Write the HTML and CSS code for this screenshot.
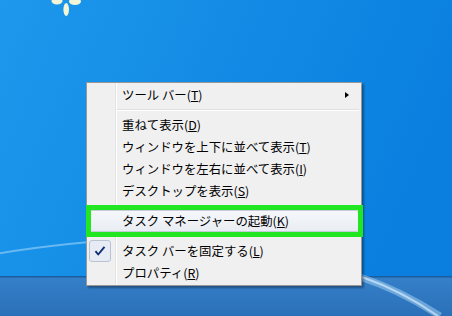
FILE: index.html
```html
<!DOCTYPE html>
<html lang="ja">
<head>
<meta charset="utf-8">
<link rel="stylesheet" href="styles.css">
</head>
<body>
<div class="desktop">
  <svg class="wallpaper" width="452" height="316" viewBox="0 0 452 316">
    <defs>
      <linearGradient id="sky" x1="0" y1="0" x2="1" y2="0.3">
        <stop offset="0" stop-color="#1d98ec"/>
        <stop offset="1" stop-color="#0a7fdf"/>
      </linearGradient>
      <linearGradient id="bar" x1="0" y1="0" x2="0" y2="1">
        <stop offset="0" stop-color="#3580c9"/>
        <stop offset="1" stop-color="#2a70b8"/>
      </linearGradient>
    </defs>
    <rect width="452" height="316" fill="url(#sky)"/>
    <path d="M-5 254 Q 60 243 140 238" stroke="#7cc3f3" stroke-width="2" fill="none" opacity="0.8"/>
    <rect y="277" width="452" height="39" fill="url(#bar)"/>
    <rect y="276" width="452" height="1.5" fill="#1a5c9e"/>
    <path d="M360 277 Q 400 290 440 316" stroke="#a9d6f7" stroke-width="7" fill="none" opacity="0.5"/>
    <path d="M362 277 Q 402 291 438 316" stroke="#dff0fc" stroke-width="2" fill="none" opacity="0.65"/>
    <ellipse cx="57" cy="1" rx="5.5" ry="3.5" fill="#f3f6d6"/>
    <ellipse cx="75" cy="1.5" rx="6" ry="3.5" fill="#f3f6d6"/>
    <ellipse cx="66.2" cy="9.5" rx="2.8" ry="6.5" fill="#f3f6d6"/>
  </svg>

  <div class="menu">
    <div class="item has-sub"><span class="label">ツール バー(<u>T</u>)</span><span class="arrow"></span></div>
    <div class="sep"></div>
    <div class="item"><span class="label">重ねて表示(<u>D</u>)</span></div>
    <div class="item"><span class="label">ウィンドウを上下に並べて表示(<u>T</u>)</span></div>
    <div class="item"><span class="label">ウィンドウを左右に並べて表示(<u>I</u>)</span></div>
    <div class="item"><span class="label">デスクトップを表示(<u>S</u>)</span></div>
    <div class="sep"></div>
    <div class="item hover"><span class="label">タスク マネージャーの起動(<u>K</u>)</span></div>
    <div class="sep"></div>
    <div class="item checked">
      <span class="check">
        <svg width="12" height="12" viewBox="0 0 12 12"><path d="M1.5 6.2 L4.2 9.5 L10.5 1.8" stroke="#0e2f74" stroke-width="1.9" fill="none" stroke-linejoin="round"/></svg>
      </span>
      <span class="label">タスク バーを固定する(<u>L</u>)</span>
    </div>
    <div class="item"><span class="label">プロパティ(<u>R</u>)</span></div>
  </div>
  <div class="mark"></div>
</div>
</body>
</html>
```

FILE: styles.css
```css
html, body {
  margin: 0;
  padding: 0;
}
body {
  width: 452px;
  height: 316px;
  overflow: hidden;
  font-family: "Noto Sans CJK JP", "Noto Sans", sans-serif;
}
.desktop {
  position: relative;
  width: 452px;
  height: 316px;
}
.wallpaper {
  position: absolute;
  left: 0;
  top: 0;
  display: block;
}
.menu {
  position: absolute;
  left: 86px;
  top: 82px;
  width: 274px;
  padding: 1px 0 1px 0;
  border: 1px solid #979797;
  background:
    linear-gradient(to right, transparent 28px, #e2e3e3 28px, #e2e3e3 29px, #ffffff 29px, #ffffff 30px, transparent 30px),
    #f0f0f0;
  box-shadow: 2px 2px 2px rgba(0, 0, 0, 0.35);
  display: flex;
  flex-direction: column;
  font-size: 12.4px;
  color: #000;
}
.item {
  height: 22px;
  display: flex;
  align-items: center;
  padding-left: 34px;
  position: relative;
  margin: 0 2px 0 1px;
  box-sizing: border-box;
  line-height: 1;
}
.item .label {
  white-space: nowrap;
}
.item u {
  text-decoration: underline;
  text-underline-offset: 1px;
}
.has-sub .arrow {
  margin-left: auto;
  margin-right: 10px;
  width: 0;
  height: 0;
  border-top: 3.5px solid transparent;
  border-bottom: 3.5px solid transparent;
  border-left: 4px solid #000;
}
.sep {
  height: 8px;
  margin-left: 30px;
  margin-right: 2px;
  background: linear-gradient(to bottom, transparent 3px, #e0e0e0 3px, #e0e0e0 4px, #ffffff 4px, #ffffff 5px, transparent 5px);
}
.hover {
  background: linear-gradient(to bottom, #f5f7fa, #e9edf3);
  border: 1px solid #c3ccd8;
  border-radius: 3px;
  padding-left: 33px;
}
.checked .check {
  position: absolute;
  left: 1px;
  top: 0;
  width: 20px;
  height: 20px;
  border: 1px solid #b7c3d3;
  border-radius: 3px;
  background: #e7ecf4;
  display: flex;
  align-items: center;
  justify-content: center;
}
.mark {
  position: absolute;
  left: 86px;
  top: 205px;
  width: 267px;
  height: 22px;
  border: 5px solid #22e622;
}
```
